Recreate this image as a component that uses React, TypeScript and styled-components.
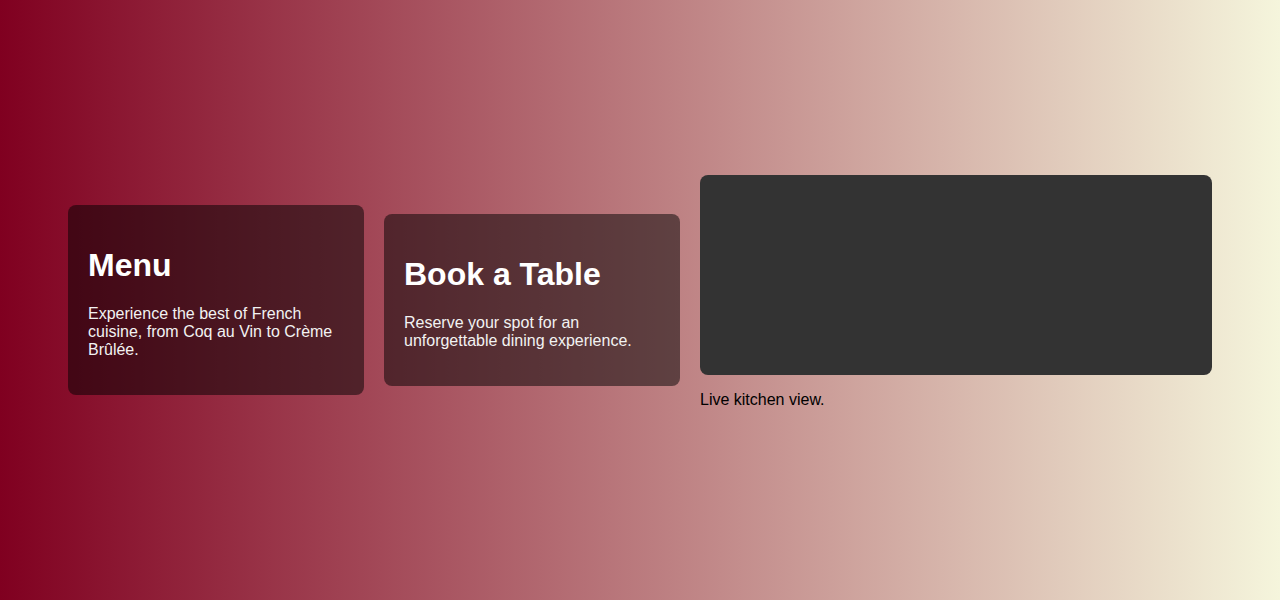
import React from "react";
import styled, { createGlobalStyle } from "styled-components";

const GlobalStyle = createGlobalStyle`
  html, body {
    margin: 0;
    padding: 0;
  }
  body {
    font-family: "Liberation Sans", Arial, sans-serif;
    background: linear-gradient(to right, #800020, #f5f5dc);
    min-height: 100vh;
  }
`;

const Page = styled.main`
  display: flex;
  align-items: center;
  justify-content: center;
  gap: 20px;
  min-height: 100vh;
  padding: 0 68px;
  box-sizing: border-box;
`;

const Card = styled.section`
  width: 296px;
  box-sizing: border-box;
  padding: 20px;
  border-radius: 8px;
  background: rgba(0, 0, 0, 0.5);
  color: #fff;
`;

const CardTitle = styled.h1`
  font-size: 32px;
  font-weight: bold;
  margin: 21.44px 0;
`;

const CardText = styled.p`
  font-size: 16px;
  margin: 16px 0;
  color: #f2f2f2;
`;

const KitchenView = styled.figure`
  width: 512px;
  margin: 0;
`;

const VideoFrame = styled.div`
  height: 200px;
  border-radius: 8px;
  background: #333;
`;

const Caption = styled.p`
  font-size: 16px;
  margin: 16px 0;
  color: #000;
`;

const cards = [
  {
    title: "Menu",
    text: "Experience the best of French cuisine, from Coq au Vin to Crème Brûlée.",
  },
  {
    title: "Book a Table",
    text: "Reserve your spot for an unforgettable dining experience.",
  },
];

const App = () => {
  return (
    <>
      <GlobalStyle />
      <Page>
        {cards.map((card) => (
          <Card key={card.title}>
            <CardTitle>{card.title}</CardTitle>
            <CardText>{card.text}</CardText>
          </Card>
        ))}
        <KitchenView>
          <VideoFrame />
          <Caption>Live kitchen view.</Caption>
        </KitchenView>
      </Page>
    </>
  );
};

export default App;
